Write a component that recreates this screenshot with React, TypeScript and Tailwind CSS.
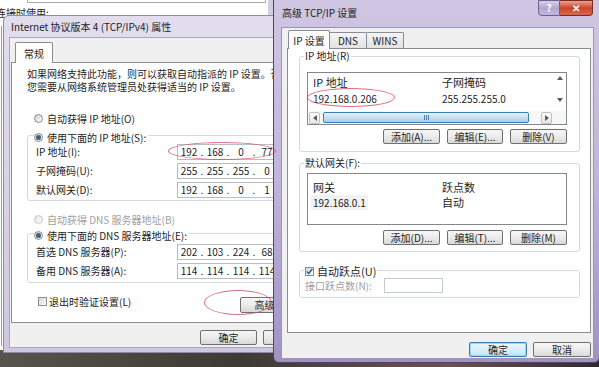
import React, { Fragment } from "react";

const Radio = ({ checked = false, disabled = false }: { checked?: boolean; disabled?: boolean }) => (
  <span
    className={
      disabled
        ? "w-[9px] h-[9px] rounded-full border border-[#c6c6c6] bg-linear-to-br from-[#e6e6e6] to-[#fbfbfb] flex items-center justify-center shrink-0"
        : "w-[9px] h-[9px] rounded-full border border-[#8a8c90] bg-linear-to-br from-[#d2d2d2] to-[#fafafa] flex items-center justify-center shrink-0"
    }
  >
    {checked && <span className="w-[5px] h-[5px] rounded-full bg-[#3f5f7f]" />}
  </span>
);

const Check = ({ checked = false }: { checked?: boolean }) => (
  <span className="w-[9px] h-[9px] border border-[#8a8c90] bg-linear-to-br from-[#d8d8d8] to-[#fbfbfb] flex items-center justify-center shrink-0">
    {checked && (
      <svg width="7" height="7" viewBox="0 0 7 7">
        <path d="M0.8 3.4 L2.7 5.4 L6.3 1.1" stroke="#2c5a96" strokeWidth="1.5" fill="none" />
      </svg>
    )}
  </span>
);

const Btn = ({ className, children }: { className: string; children: React.ReactNode }) => (
  <div
    className={
      "h-[15px] shrink-0 border border-[#707070] rounded-[2px] bg-linear-to-b from-[#f6f6f6] via-[#ebebeb] to-[#d9d9d9] flex items-center justify-center whitespace-nowrap text-[10px] leading-none text-[#1e1e1e] " +
      className
    }
  >
    {children}
  </div>
);

const IpBox = ({ parts }: { parts: string[] }) => (
  <div className="h-[16px] w-[110px] shrink-0 border border-[#b8bcc4] bg-white flex items-center leading-none">
    {parts.map((p, i) => (
      <Fragment key={i}>
        <span className="w-[22px] text-center">{p}</span>
        {i < 3 && <span className="w-[4px] text-center">.</span>}
      </Fragment>
    ))}
  </div>
);

const Row = ({ label, parts }: { label: string; parts: string[] }) => (
  <div className="h-[19px] flex items-center pl-[2px]">
    <span className="w-[141px] whitespace-nowrap">{label}</span>
    <IpBox parts={parts} />
  </div>
);

const Tri = ({ dir }: { dir: "up" | "down" | "left" | "right" }) => {
  const d =
    dir === "up"
      ? "M0 4 L3 0 L6 4 Z"
      : dir === "down"
      ? "M0 0 L6 0 L3 4 Z"
      : dir === "left"
      ? "M4 0 L4 6 L0 3 Z"
      : "M0 0 L0 6 L4 3 Z";
  const w = dir === "up" || dir === "down" ? 6 : 4;
  const h = dir === "up" || dir === "down" ? 4 : 6;
  return (
    <svg width={w} height={h} viewBox={`0 0 ${w} ${h}`}>
      <path d={d} fill="#5a5a5a" />
    </svg>
  );
};

const HScroll = () => (
  <div className="h-[13px] flex items-center bg-[#f7f7f7]">
    <div className="ml-[1px] w-[11px] h-[12px] border border-[#c0c0c0] rounded-[2px] bg-linear-to-b from-[#fbfbfb] to-[#e8e8e8] flex items-center justify-center">
      <Tri dir="left" />
    </div>
    <div className="ml-[3px] w-[206px] h-[11px] border border-[#3c7fb1] rounded-[2px] bg-linear-to-b from-[#e6f2fb] via-[#c4e1f6] to-[#a5cfef] flex items-center justify-center gap-[1px]">
      <span className="w-[1px] h-[5px] bg-[#4f7fa8]" />
      <span className="w-[1px] h-[5px] bg-[#4f7fa8]" />
      <span className="w-[1px] h-[5px] bg-[#4f7fa8]" />
    </div>
    <div className="ml-[12px] w-[11px] h-[12px] border border-[#c0c0c0] rounded-[2px] bg-linear-to-b from-[#fbfbfb] to-[#e8e8e8] flex items-center justify-center">
      <Tri dir="right" />
    </div>
  </div>
);

export default function App() {
  return (
    <div className="relative w-[599px] h-[367px] overflow-hidden font-['Noto_Sans_CJK_SC',sans-serif] text-[10px] text-[#1e1e1e] bg-[linear-gradient(90deg,#57544d_0%,#3d3a35_40%,#6b5151_75%,#2f2a2c_100%)]">
      {/* background window */}
      <div className="absolute left-[-20px] top-[-40px] w-[294px] h-[390px] bg-white border-r-[6px] border-[#d3cde2] flex flex-col">
        <div className="ml-[47px] mt-[13px] w-[239px] h-[30px] border border-[#a9a9b0]" />
        <div className="mt-[3px] ml-[16px] h-[14px] leading-[14px] whitespace-nowrap">连接时使用:</div>
        <div className="ml-[21px] mt-[6px] h-[320px] w-[10px] border-l border-[#9a98a8]" />
      </div>

      {/* left dialog */}
      <div className="absolute left-[3px] top-[15px] w-[334px] h-[338px] rounded-t-[6px] border border-[#8f88a6] bg-linear-to-b from-[#e3deee] to-[#cfc7e0] flex flex-col px-[5px] pb-[4px]">
        <div className="h-[21px] flex items-center pl-[2px] text-[10px] text-[#222] whitespace-nowrap">
          Internet 协议版本 4 (TCP/IPv4) 属性
        </div>
        <div className="flex-1 bg-[#f0f0f0] border border-[#aaa5ba] flex flex-col px-[1px] pt-[4px]">
          <div className="h-[20px] flex items-start pl-[4px] relative z-10">
            <div className="w-[38px] h-[21px] bg-white border border-[#898c95] border-b-0 rounded-t-[2px] flex items-center justify-center">
              常规
            </div>
          </div>
          <div className="h-[261px] bg-white border border-[#898c95] flex flex-col pl-[15px] pt-[4px]">
            <div className="h-[13px] leading-[13px] whitespace-nowrap">
              如果网络支持此功能，则可以获取自动指派的 IP 设置。否则，
            </div>
            <div className="h-[13px] leading-[13px] whitespace-nowrap">
              您需要从网络系统管理员处获得适当的 IP 设置。
            </div>
            <div className="mt-[18px] ml-[7px] h-[14px] flex items-center gap-[4px] whitespace-nowrap">
              <Radio />
              <span>自动获得 IP 地址(O)</span>
            </div>
            <fieldset className="mt-[3px] border border-[#d3d9df] rounded-[3px] pl-[6px] pb-[1px]">
              <legend className="h-[14px] pr-[2px]">
                <span className="inline-flex items-center gap-[4px] h-[14px] whitespace-nowrap">
                  <Radio checked />
                  <span>使用下面的 IP 地址(S):</span>
                </span>
              </legend>
              <Row label="IP 地址(I):" parts={["192", "168", "0", "77"]} />
              <Row label="子网掩码(U):" parts={["255", "255", "255", "0"]} />
              <Row label="默认网关(D):" parts={["192", "168", "0", "1"]} />
            </fieldset>
            <div className="mt-[11px] ml-[7px] h-[14px] flex items-center gap-[4px] whitespace-nowrap text-[#a0a0a0]">
              <Radio disabled />
              <span>自动获得 DNS 服务器地址(B)</span>
            </div>
            <fieldset className="border border-[#d3d9df] rounded-[3px] pl-[6px] pt-[2px] pb-[2px]">
              <legend className="h-[14px] pr-[2px]">
                <span className="inline-flex items-center gap-[4px] h-[14px] whitespace-nowrap">
                  <Radio checked />
                  <span>使用下面的 DNS 服务器地址(E):</span>
                </span>
              </legend>
              <Row label="首选 DNS 服务器(P):" parts={["202", "103", "224", "68"]} />
              <Row label="备用 DNS 服务器(A):" parts={["114", "114", "114", "114"]} />
            </fieldset>
            <div className="mt-[10px] flex items-start">
              <div className="w-[213px] h-[16px] pl-[11px] flex items-center gap-[2px] whitespace-nowrap">
                <Check />
                <span>退出时验证设置(L)</span>
              </div>
              <Btn className="w-[70px] mt-[4px] h-[16px]">高级(V)...</Btn>
            </div>
          </div>
          <div className="mt-[7px] flex justify-end gap-[6px] pr-[9px]">
            <Btn className="w-[57px]">确定</Btn>
            <Btn className="w-[57px]">取消</Btn>
          </div>
        </div>
      </div>

      {/* right dialog */}
      <div className="absolute left-[273px] top-[-5px] w-[327px] h-[368px] rounded-[6px] border border-[#4d4470] bg-linear-to-b from-[#d0c7e3] via-[#c1b5da] to-[#a192c2] flex flex-col pl-[7px] pr-[5px] pb-[3px]">
        <div className="h-[31px] flex items-start">
          <div className="mt-[8px] h-[18px] leading-[18px] pl-[1px] text-[10px] text-[#1b1b1b] whitespace-nowrap">
            高级 TCP/IP 设置
          </div>
          <div className="ml-auto mt-[4px] mr-[1px] flex">
            <div className="w-[22px] h-[16px] border border-[#6a6090] rounded-bl-[4px] bg-linear-to-b from-[#d8d0ea] via-[#b2a6cf] to-[#c4b8e0] flex items-center justify-center text-white font-bold text-[10px] leading-none">
              ?
            </div>
            <div className="w-[33px] h-[16px] border border-l-0 border-[#7a2a22] rounded-br-[4px] bg-linear-to-b from-[#e9a08e] via-[#c9452c] to-[#d96a4c] flex items-center justify-center text-white font-bold text-[10px] leading-none">
              ✕
            </div>
          </div>
        </div>
        <div className="flex-1 bg-[#f0f0f0] border border-[#9e94ba] flex flex-col pt-[2px] pl-[5px] pr-[2px]">
          <div className="h-[18px] flex items-start pl-[1px] relative z-10">
            <div className="w-[42px] h-[19px] bg-white border border-[#898c95] border-b-0 rounded-t-[2px] flex items-center justify-center whitespace-nowrap">
              IP 设置
            </div>
            <div className="mt-[2px] w-[37px] h-[16px] bg-linear-to-b from-[#f5f5f5] to-[#e2e2e2] border border-l-0 border-b-0 border-[#898c95] rounded-tr-[2px] flex items-center justify-center">
              DNS
            </div>
            <div className="mt-[2px] w-[37px] h-[16px] bg-linear-to-b from-[#f5f5f5] to-[#e2e2e2] border border-l-0 border-b-0 border-[#898c95] rounded-tr-[2px] flex items-center justify-center">
              WINS
            </div>
          </div>
          <div className="h-[285px] bg-white border border-[#898c95] flex flex-col">
            {/* IP addresses */}
            <fieldset className="ml-[11px] mr-[10px] border border-[#d3d9df] rounded-[3px] pl-[4px] pb-[7px]">
              <legend className="h-[14px] leading-[14px] px-[1px] whitespace-nowrap">IP 地址(R)</legend>
              <div className="ml-[3px] mt-[9px] w-[260px] h-[53px] border border-[#828790] bg-white flex flex-col">
                <div className="flex flex-1 min-h-0">
                  <div className="flex-1 flex flex-col">
                    <div className="mt-[1px] h-[16px] flex items-center text-[11px] whitespace-nowrap">
                      <span className="w-[134px] pl-[5px]">IP 地址</span>
                      <span>子网掩码</span>
                    </div>
                    <div className="mt-[1px] h-[14px] flex items-center whitespace-nowrap">
                      <span className="w-[134px] pl-[5px]">192.168.0.206</span>
                      <span>255.255.255.0</span>
                    </div>
                  </div>
                  <div className="w-[13px] flex flex-col items-center">
                    <div className="h-[10px] flex items-center">
                      <Tri dir="up" />
                    </div>
                    <div className="mt-auto mb-[6px] h-[10px] flex items-center">
                      <Tri dir="down" />
                    </div>
                  </div>
                </div>
                <HScroll />
              </div>
              <div className="ml-[3px] mt-[4px] w-[260px] flex justify-end gap-[7px]">
                <Btn className="w-[57px]">添加(A)...</Btn>
                <Btn className="w-[56px]">编辑(E)...</Btn>
                <Btn className="w-[57px]">删除(V)</Btn>
              </div>
            </fieldset>

            {/* Default gateway */}
            <fieldset className="mt-[4px] ml-[11px] mr-[10px] border border-[#d3d9df] rounded-[3px] pl-[4px] pb-[6px]">
              <legend className="h-[14px] leading-[14px] px-[1px] whitespace-nowrap">默认网关(F):</legend>
              <div className="ml-[3px] mt-[3px] w-[260px] h-[52px] border border-[#828790] bg-white flex flex-col">
                <div className="mt-[5px] h-[16px] flex items-center text-[11px] whitespace-nowrap">
                  <span className="w-[134px] pl-[5px]">网关</span>
                  <span>跃点数</span>
                </div>
                <div className="h-[14px] flex items-center whitespace-nowrap">
                  <span className="w-[134px] pl-[3px]">
                    <span className="bg-[#f1f1f1] px-[2px]">192.168.0.1</span>
                  </span>
                  <span className="text-[11px]">自动</span>
                </div>
              </div>
              <div className="ml-[3px] mt-[5px] w-[260px] flex justify-end gap-[7px]">
                <Btn className="w-[57px]">添加(D)...</Btn>
                <Btn className="w-[56px]">编辑(T)...</Btn>
                <Btn className="w-[57px]">删除(M)</Btn>
              </div>
            </fieldset>

            {/* Automatic metric */}
            <fieldset className="mt-[11px] ml-[11px] mr-[10px] border border-[#d3d9df] rounded-[3px] pl-[4px] pb-[4px]">
              <legend className="h-[14px] px-[1px]">
                <span className="inline-flex items-center gap-[3px] h-[14px] whitespace-nowrap text-[11px]">
                  <Check checked />
                  <span>自动跃点(U)</span>
                </span>
              </legend>
              <div className="mt-[1px] h-[15px] pl-[1px] flex items-center">
                <span className="w-[79px] text-[#a0a0a0] whitespace-nowrap">接口跃点数(N):</span>
                <div className="w-[59px] h-[15px] border border-[#c4c8cf] bg-white" />
              </div>
            </fieldset>
          </div>
          <div className="mt-[9px] flex justify-end gap-[6px]">
            <div className="w-[58px] h-[15px] border border-[#3c7fb1] rounded-[2px] bg-linear-to-b from-[#eaf6fd] via-[#d9effc] to-[#bee6fd] shadow-[inset_0_0_0_1px_#9fd2f3] flex items-center justify-center text-[10px] leading-none">
              确定
            </div>
            <Btn className="w-[58px]">取消</Btn>
          </div>
        </div>
      </div>

      {/* red marker ellipses */}
      <div className="absolute left-[168px] top-[142px] w-[108px] h-[18px] rounded-[50%] border border-[#d44a5c]/80" />
      <div className="absolute left-[204px] top-[290px] w-[68px] h-[25px] rounded-[50%] border border-[#d44a5c]/80" />
      <div className="absolute left-[307px] top-[88px] w-[88px] h-[19px] rounded-[50%] border border-[#d44a5c]/80" />
    </div>
  );
}
